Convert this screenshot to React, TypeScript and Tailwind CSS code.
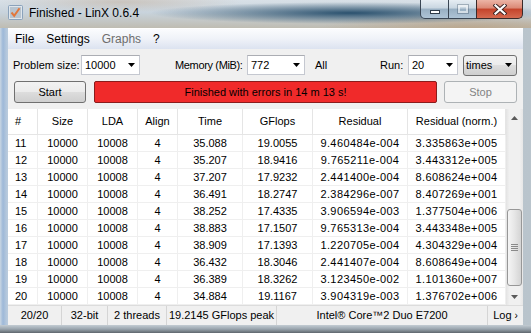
import React from "react";

const colW = ["w-[30px]", "w-[50px]", "w-[50px]", "w-[40px]", "w-[65px]", "w-[70px]", "w-[95px]", "w-[98px]"];
const headers = ["#", "Size", "LDA", "Align", "Time", "GFlops", "Residual", "Residual (norm.)"];
const rows: string[][] = [
  ["11", "10000", "10008", "4", "35.088", "19.0055", "9.460484e-004", "3.335863e+005"],
  ["12", "10000", "10008", "4", "35.207", "18.9416", "9.765211e-004", "3.443312e+005"],
  ["13", "10000", "10008", "4", "37.207", "17.9232", "2.441400e-004", "8.608624e+004"],
  ["14", "10000", "10008", "4", "36.491", "18.2747", "2.384296e-007", "8.407269e+001"],
  ["15", "10000", "10008", "4", "38.252", "17.4335", "3.906594e-003", "1.377504e+006"],
  ["16", "10000", "10008", "4", "38.883", "17.1507", "9.765313e-004", "3.443348e+005"],
  ["17", "10000", "10008", "4", "38.909", "17.1393", "1.220705e-004", "4.304329e+004"],
  ["18", "10000", "10008", "4", "36.432", "18.3046", "2.441407e-004", "8.608649e+004"],
  ["19", "10000", "10008", "4", "36.389", "18.3262", "3.123450e-002", "1.101360e+007"],
  ["20", "10000", "10008", "4", "34.884", "19.1167", "3.904319e-003", "1.376702e+006"],
];

function Arrow() {
  return (
    <svg width="7" height="4" viewBox="0 0 7 4" className="shrink-0">
      <path d="M0 0 H7 L3.5 4 Z" fill="#000" />
    </svg>
  );
}

function Combo({ w, value }: { w: string; value: string }) {
  return (
    <div className={`${w} h-[20px] bg-white border border-[#c5c8d0] border-t-[#abadb3] flex items-center pl-[3px] pr-[4px]`}>
      <span className="flex-1">{value}</span>
      <Arrow />
    </div>
  );
}

export default function App() {
  return (
    <div className="w-[531px] h-[333px] overflow-hidden flex flex-col font-['Liberation_Sans',Arial,sans-serif] text-[11px] text-black whitespace-nowrap bg-[linear-gradient(90deg,#c9d6e3_0px,#9db8d8_3px,#b8cadd_7px,#c2cfdb_40%,#b9c4cc_100%)]">
      {/* Title bar */}
      <div className="h-[28px] shrink-0 flex items-start bg-[radial-gradient(ellipse_200px_11px_at_350px_13px,rgba(34,74,104,0.95),rgba(34,74,104,0)),radial-gradient(ellipse_150px_14px_at_470px_28px,rgba(185,160,130,0.75),rgba(185,160,130,0)),radial-gradient(ellipse_120px_10px_at_120px_2px,rgba(190,170,150,0.5),rgba(190,170,150,0)),linear-gradient(180deg,#d8e0e7_0%,#c8d3dc_45%,#bfbcb2_100%)]">
        <div className="ml-[8px] mt-[5px] w-[15px] h-[15px]">
          <svg width="15" height="15" viewBox="0 0 15 15">
            <rect x="0.5" y="0.5" width="14" height="14" rx="1" fill="#c9d3dc" stroke="#8aa2bb" />
            <rect x="1.5" y="1.5" width="12" height="12" fill="#b8c4cf" stroke="#dfe6ec" />
            <path d="M3.5 7.5 L6.2 10.8 L11.5 3.2" fill="none" stroke="#e2773c" strokeWidth="2" />
          </svg>
        </div>
        <span className="ml-[6px] mt-[6px] text-[12px] leading-[15px]">Finished - LinX 0.6.4</span>
        <div className="ml-auto mr-[8px] flex h-[20px]">
          <div className="w-[29px] h-[19px] rounded-bl-[5px] border border-t-0 border-[#3a4654] bg-[linear-gradient(180deg,#e6edf3_0%,#c9d6e1_45%,#98afc2_50%,#aec4d6_100%)] flex items-end justify-center pb-[4px]">
            <div className="w-[10px] h-[4px] bg-white border border-[#2e3b48]" />
          </div>
          <div className="w-[27px] h-[19px] border-b border-[#3a4654] bg-[linear-gradient(180deg,#e6edf3_0%,#c9d6e1_45%,#98afc2_50%,#aec4d6_100%)] flex items-center justify-center">
            <div className="w-[10px] h-[8px] border-2 border-[rgba(255,255,255,0.55)] outline outline-1 outline-[rgba(60,80,100,0.35)]" />
          </div>
          <div className="w-[47px] h-[19px] rounded-br-[5px] border border-t-0 border-[#3a2a2a] bg-[linear-gradient(180deg,#ecb4a6_0%,#db8875_45%,#c4432b_50%,#d56a50_100%)] flex items-center justify-center">
            <svg width="14" height="11" viewBox="0 0 14 11">
              <path d="M2.5 1.5 L11.5 9.5 M11.5 1.5 L2.5 9.5" stroke="#3b2222" strokeWidth="4" strokeLinecap="square" />
              <path d="M2.5 1.5 L11.5 9.5 M11.5 1.5 L2.5 9.5" stroke="#ffffff" strokeWidth="2.2" strokeLinecap="square" />
            </svg>
          </div>
        </div>
      </div>

      {/* Client area */}
      <div className="mx-[8px] h-[297px] shrink-0 flex flex-col bg-[#f0f0f0]">
        {/* Menu bar */}
        <div className="h-[21px] shrink-0 flex items-center text-[12px] border-t border-white bg-[linear-gradient(180deg,#fbfcfe_0%,#eff2f8_50%,#dce3f0_100%)]">
          <span className="ml-[1px] px-[6px]">File</span>
          <span className="px-[6px]">Settings</span>
          <span className="px-[6px] text-[#6d6d6d]">Graphs</span>
          <span className="px-[6px]">?</span>
        </div>

        {/* Row 1 */}
        <div className="mt-[6px] h-[20px] shrink-0 flex items-center text-[11px]">
          <span className="ml-[5px] w-[68px] shrink-0">Problem size:</span>
          <Combo w="w-[59px]" value="10000" />
          <span className="ml-[35px] w-[72px] shrink-0 tracking-[-0.35px]">Memory (MiB):</span>
          <Combo w="w-[58px]" value="772" />
          <span className="ml-[10px] w-[65px] shrink-0">All</span>
          <span className="w-[28px] shrink-0">Run:</span>
          <Combo w="w-[50px]" value="20" />
          <div className="ml-[5px] w-[54px] h-[21px] rounded-[3px] border border-[#707070] bg-[linear-gradient(180deg,#f2f2f2_0%,#ebebeb_50%,#dddddd_50%,#cfcfcf_100%)] flex items-center pl-[2px] pr-[4px]">
            <span className="flex-1">times</span>
            <Arrow />
          </div>
        </div>

        {/* Row 2 */}
        <div className="mt-[6px] h-[22px] shrink-0 flex items-stretch text-[11px]">
          <div className="ml-[6px] w-[72px] rounded-[3px] border border-[#707070] bg-[linear-gradient(180deg,#f2f2f2_0%,#ebebeb_50%,#dddddd_50%,#cfcfcf_100%)] flex items-center justify-center">
            Start
          </div>
          <div className="ml-[8px] w-[343px] rounded-[2px] border border-[#8a1c1c] bg-[#f02a2a] flex items-center justify-center">
            Finished with errors in 14 m 13 s!
          </div>
          <div className="ml-[7px] w-[73px] rounded-[3px] border border-[#adb2b5] bg-[#f4f4f4] text-[#838383] flex items-center justify-center">
            Stop
          </div>
        </div>

        {/* Table */}
        <div className="mt-[6px] h-[196px] shrink-0 flex bg-white">
          <div className="w-[498px] flex flex-col">
            <div className="h-[26px] shrink-0 flex border-b border-[#e5e5e5] bg-white">
              {headers.map((h, i) => (
                <div
                  key={i}
                  className={`${colW[i]} shrink-0 border-r border-[#e5e5e5] flex items-center ${i === 0 ? "pl-[7px]" : "justify-center"}`}
                >
                  {h}
                </div>
              ))}
            </div>
            {rows.map((r, ri) => (
              <div key={ri} className="h-[17px] shrink-0 flex border-b border-[#efefef]">
                {r.map((c, ci) => (
                  <div
                    key={ci}
                    className={`${colW[ci]} shrink-0 border-r border-[#efefef] flex items-center ${ci === 0 ? "pl-[7px]" : "justify-center"} ${ci >= 6 ? "tracking-[0.4px]" : ""}`}
                  >
                    {c}
                  </div>
                ))}
              </div>
            ))}
          </div>
          {/* Scrollbar */}
          <div className="w-[17px] flex flex-col bg-[linear-gradient(90deg,#e3e3e3_0%,#f0f0f0_20%,#f0f0f0_80%,#e6e6e6_100%)]">
            <div className="h-[17px] shrink-0 flex items-center justify-center">
              <svg width="7" height="4" viewBox="0 0 7 4">
                <path d="M0 4 H7 L3.5 0 Z" fill="#5a5a5a" />
              </svg>
            </div>
            <div className="h-[83px] shrink-0" />
            <div className="h-[77px] shrink-0 mx-[1px] rounded-[3px] border border-[#979797] bg-[linear-gradient(90deg,#f5f5f5_0%,#e6e6e6_50%,#d4d4d4_100%)] flex flex-col items-center justify-center gap-[1px]">
              <div className="w-[7px] h-[1px] bg-[#8a8a8a]" />
              <div className="w-[7px] h-[1px] bg-[#8a8a8a]" />
              <div className="w-[7px] h-[1px] bg-[#8a8a8a]" />
              <div className="w-[7px] h-[1px] bg-[#8a8a8a]" />
            </div>
            <div className="flex-1" />
            <div className="h-[17px] shrink-0 flex items-center justify-center">
              <svg width="7" height="4" viewBox="0 0 7 4">
                <path d="M0 0 H7 L3.5 4 Z" fill="#5a5a5a" />
              </svg>
            </div>
          </div>
        </div>

        {/* Status bar */}
        <div className="h-[20px] shrink-0 flex text-[11px] bg-[#f0f0f0] border-t border-[#dcdcdc]">
          <div className="w-[54px] border-r border-[#d5d5d5] flex items-center justify-center">20/20</div>
          <div className="w-[46px] border-r border-[#d5d5d5] flex items-center justify-center">32-bit</div>
          <div className="w-[59px] border-r border-[#d5d5d5] flex items-center justify-center">2 threads</div>
          <div className="w-[110px] border-r border-[#d5d5d5] flex items-center justify-center">19.2145 GFlops peak</div>
          <div className="w-[211px] border-r border-[#d5d5d5] flex items-center justify-center">Intel® Core™2 Duo E7200</div>
          <div className="flex-1 flex items-center justify-center gap-[3px]">
            <span>Log</span>
            <span className="text-[10px]">›</span>
          </div>
        </div>
      </div>

      {/* Bottom frame */}
      <div className="flex-1 bg-[linear-gradient(180deg,#c3ccd3_0%,#9aa5ae_50%,#5e666d_100%)]" />
    </div>
  );
}
